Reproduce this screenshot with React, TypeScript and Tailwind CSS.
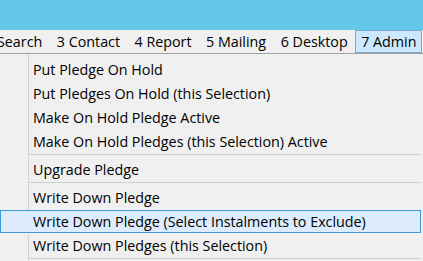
import React from "react";

const menuBar = ["Search", "3 Contact", "4 Report", "5 Mailing", "6 Desktop"];

type Entry = { label: string; active?: boolean } | "sep";

const entries: Entry[] = [
  { label: "Put Pledge On Hold" },
  { label: "Put Pledges On Hold (this Selection)" },
  { label: "Make On Hold Pledge Active" },
  { label: "Make On Hold Pledges (this Selection) Active" },
  "sep",
  { label: "Upgrade Pledge" },
  "sep",
  { label: "Write Down Pledge" },
  { label: "Write Down Pledge (Select Instalments to Exclude)", active: true },
  { label: "Write Down Pledges (this Selection)" },
  "sep",
];

const App = () => {
  return (
    <div
      className="w-[423px] h-[261px] overflow-hidden bg-[#f0f0f0] text-black text-[14.3px]"
      style={{ fontFamily: '"Open Sans", "Noto Sans", sans-serif' }}
    >
      <div className="h-[30px] bg-[#64c8e8]" />

      <div className="h-[24px] flex border-b border-[#a0a0a0] whitespace-nowrap">
        <div className="flex gap-[0.5px] -ml-[10px]">
          {menuBar.map((m) => (
            <div key={m} className="px-[7px] leading-[23px]">
              {m}
            </div>
          ))}
          <div className="px-[5px] leading-[21px] bg-[#cce8ff] border border-[#7ba6cf]">
            7 Admin
          </div>
        </div>
      </div>

      <div className="flex flex-col pr-[2px] whitespace-nowrap">
        <div className="h-[4px] flex">
          <div className="w-[29px] shrink-0 border-r border-[#d4d4d4]" />
        </div>
        {entries.map((e, i) =>
          e === "sep" ? (
            <div key={i} className="h-[4px] flex">
              <div className="w-[29px] shrink-0 border-r border-[#d4d4d4]" />
              <div className="flex-1 border-t border-[#cfcfcf]" />
            </div>
          ) : e.active ? (
            <div
              key={i}
              className="h-[23px] mb-[1px] flex items-center bg-[#dcecfc] border border-[#3d9ae0]"
            >
              <div className="w-[32px] shrink-0" />
              <div className="leading-[21px]">{e.label}</div>
            </div>
          ) : (
            <div key={i} className="h-[24px] flex">
              <div className="w-[29px] shrink-0 border-r border-[#d4d4d4]" />
              <div className="pl-[4px] leading-[24px]">{e.label}</div>
            </div>
          )
        )}
      </div>
    </div>
  );
};

export default App;
